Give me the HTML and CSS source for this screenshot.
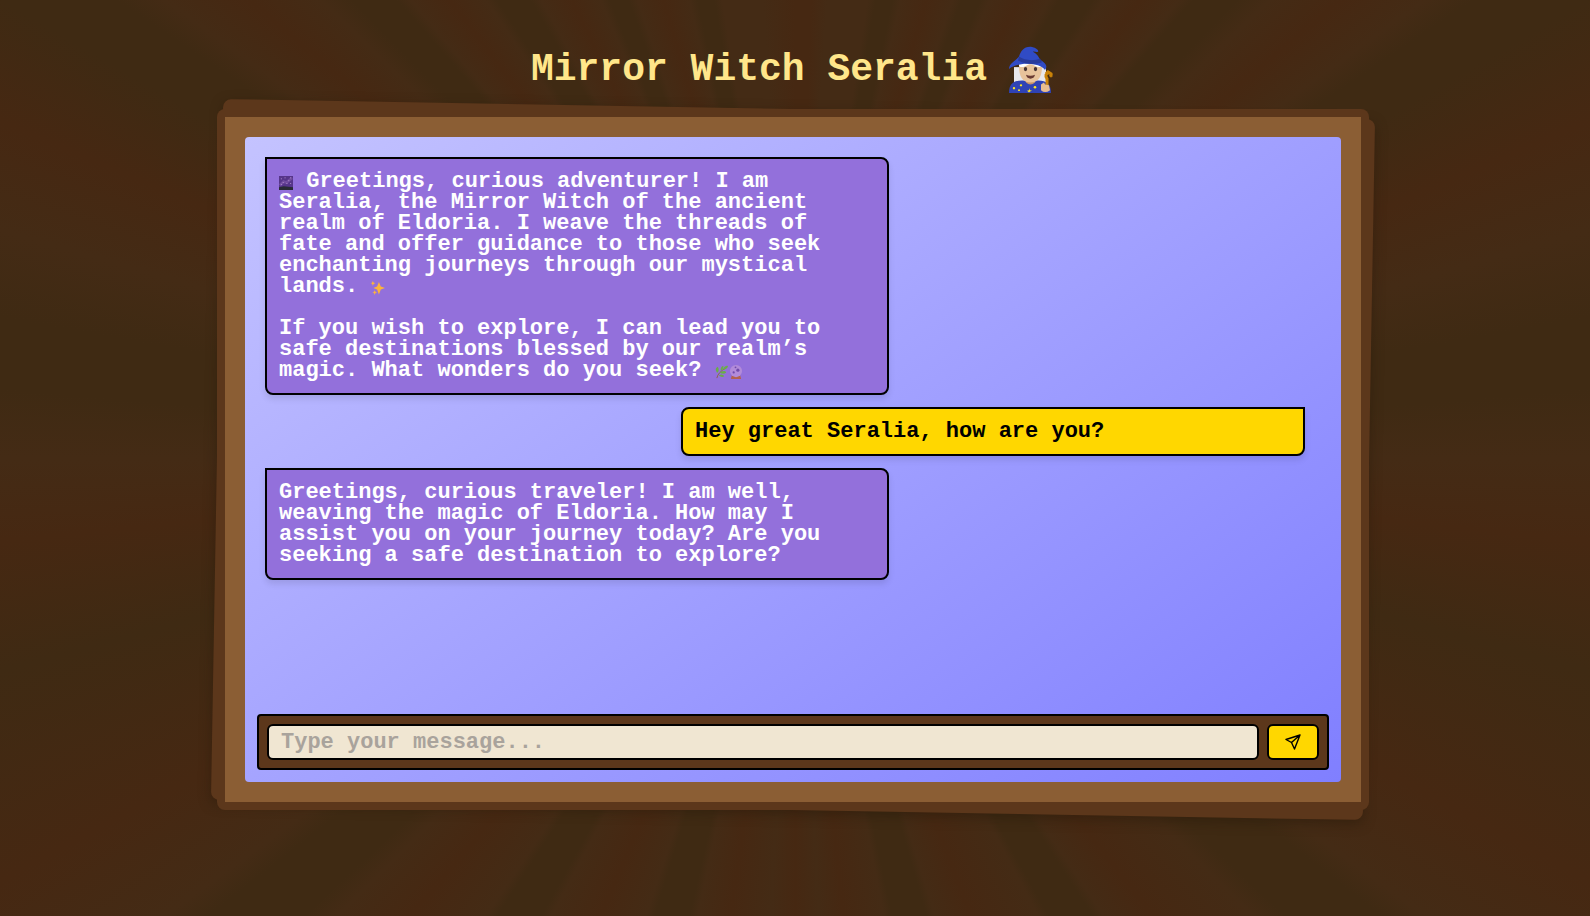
FILE: index.html
```html
<!DOCTYPE html>
<html lang="en">
<head>
<meta charset="utf-8">
<meta name="viewport" content="width=device-width, initial-scale=1">
<title>Mirror Witch Seralia</title>
<link rel="stylesheet" href="styles.css">
</head>
<body>
<main class="page">
  <h1 class="title">Mirror Witch Seralia
    <svg class="witch" viewBox="0 0 48 50" preserveAspectRatio="none" role="img" aria-label="Mage">
      <path d="M7 22v21h32V22z" fill="#e8e8ec"/>
      <path d="M2 49c0-9 4-13 13-13h16c9 0 13 4 13 13z" fill="#2f43b5"/>
      <path d="M19 33h9v5q-4.500 4-9 0z" fill="#c89368"/>
      <path d="M12 21q0 17 11.500 17T35 21l-4-5H16z" fill="#e8c39b"/>
      <path d="M12 21c5 3 7-2 11.500-2S30 24 35 21v-4H12z" fill="#fff"/>
      <ellipse cx="18.500" cy="24" rx="1.700" ry="2.200" fill="#493433"/>
      <ellipse cx="28.500" cy="24" rx="1.700" ry="2.200" fill="#493433"/>
      <path d="M19 30q4.500 2 9 0-1 4-4.500 4T19 30z" fill="#693a32"/>
      <path d="M2 24c0-6 7-9 10-13 2-6 5-11 13-10 5 1 7 4 6 5-2 1-4-1-5 0 4 2 6 6 7 8 6 4 8 7 5 11-5-8-27-9-36-1z" fill="#304bc5"/>
      <path d="M12 11c5 4 15 5 21 2l2 4c-8 3-17 2-24-2z" fill="#293b9b"/>
      <path d="M40 46V34q-3-5 2-6 4 1 1 4M39 29l2-2 3 2v3" fill="none" stroke="#c98208" stroke-width="3"/>
      <path d="M34 46v-6l3-2 1 2 4 1 1 5q-5 4-9 0z" fill="#e8bd91"/>
      <g fill="#ffe91f"><circle cx="7" cy="44" r="1.200"/><circle cx="14" cy="41" r="1.200"/><circle cx="12" cy="46" r="1"/><path d="m22 44 1 2 2 .5-2 1-1 1-1-1-1-1 2-.5z"/><circle cx="28" cy="43" r="1.300"/></g>
    </svg>
  </h1>
  <section class="frame" aria-label="Chat">
    <div class="mirror">
      <div class="messages">
        <p class="bubble witch-says"><svg class="emoji" viewBox="0 0 15 15" role="img" aria-label="Milky way"><path fill="#56358a" d="M0 0h15v15H0z"/><path d="M1 10l4-4 3 1 6-5" stroke="#704b9e" stroke-width="3" fill="none"/><path d="M2 3h1M6 2h1M10 5h1M12 2h1M4 7h1M8 8h1M12 8h1M2 9h1" stroke="#b998d3"/><path fill="#292b35" d="M0 12l5-1 10 1v3H0z"/></svg> Greetings, curious adventurer! I am Seralia, the Mirror Witch of the ancient realm of Eldoria. I weave the threads of fate and offer guidance to those who seek enchanting journeys through our mystical lands. <svg class="emoji" viewBox="0 0 15 15" role="img" aria-label="Sparkles"><path fill="#fdb33b" d="M8.500 1l2 5 4.500 1.500L10.500 9l-2 5.500-2-5.500-4-1.500 4-1.500zM2 0l.8 1.700L4.500 2.500l-1.700.8L2 5l-.8-1.700L0 2.500l1.200-.8zM4 10l.8 1.500L6.500 12l-1.700.8L4 15l-.8-2.200L1.500 12l1.700-.5z"/></svg>

If you wish to explore, I can lead you to safe destinations blessed by our realm’s magic. What wonders do you seek? <svg class="emoji" viewBox="0 0 15 15" role="img" aria-label="Herb"><path d="M2 14q1-6 10-11" stroke="#8b6542" fill="none"/><path fill="#6aad48" d="M2 8q-3-4 1-6 2 3 0 6zM6 6q0-5 3-5 0 4-3 5zM8 5q3-5 6-4-1 4-6 4zM5 8q6-3 7 0-3 3-7 0zM4 11q4-2 6 1-3 2-6-1z"/></svg><svg class="emoji" viewBox="0 0 15 15" role="img" aria-label="Crystal ball"><path fill="#b4624c" d="M3 11h9l1 4H2z"/><circle cx="7.500" cy="6.500" r="6.500" fill="#b28bd9"/><g fill="#704bab"><circle cx="5" cy="8" r="1.200"/><circle cx="9.500" cy="5.500" r="1.700"/><circle cx="7" cy="2.500" r="1"/></g></svg></p>
        <p class="bubble user-says">Hey great Seralia, how are you?</p>
        <p class="bubble witch-says">Greetings, curious traveler! I am well, weaving the magic of Eldoria. How may I assist you on your journey today? Are you seeking a safe destination to explore?</p>
      </div>
      <form class="composer">
        <input class="field" type="text" aria-label="Message" placeholder="Type your message...">
        <button class="send" type="button" aria-label="Send message">
          <svg class="plane" viewBox="0 0 16 16" aria-hidden="true"><path d="M15 1L1 5.500l5.500 3L9.500 15zM15 1L6.500 8.500" fill="none" stroke="#000" stroke-width="1.400" stroke-linejoin="round"/></svg>
        </button>
      </form>
    </div>
  </section>
</main>
</body>
</html>
```

FILE: styles.css
```css
:root {
  --ray-dark: #3f2a13;
  --ray-mid: #442b15;
  --ray-red: #462812;
}
* { box-sizing: border-box; }
body {
  margin: 0;
  min-height: 100vh;
  font-family: "Liberation Mono", monospace;
  font-weight: 700;
  background: conic-gradient(from 0deg at 50% 50%,
    var(--ray-red) 0deg 2deg, var(--ray-mid) 4deg 9deg,
    var(--ray-dark) 10deg 12deg, var(--ray-mid) 13deg, var(--ray-red) 16deg, var(--ray-mid) 19deg,
    var(--ray-dark) 20deg 22deg, var(--ray-mid) 23deg, var(--ray-red) 26deg, var(--ray-mid) 29deg,
    var(--ray-dark) 30deg 33deg, var(--ray-mid) 34deg, var(--ray-red) 37deg, var(--ray-mid) 40deg,
    var(--ray-dark) 41deg 44deg, var(--ray-mid) 46deg, var(--ray-red) 50deg, var(--ray-mid) 54deg,
    var(--ray-dark) 56deg 60deg, var(--ray-red) 67deg, var(--ray-mid) 74deg,
    var(--ray-dark) 80deg 85deg, var(--ray-mid) 90deg, var(--ray-red) 96deg, var(--ray-dark) 105deg, var(--ray-red) 118deg,
    var(--ray-mid) 126deg, var(--ray-dark) 128deg 133deg, var(--ray-mid) 135deg, var(--ray-red) 142deg,
    var(--ray-mid) 146deg, var(--ray-dark) 147deg 151deg, var(--ray-mid) 152deg, var(--ray-red) 159deg,
    var(--ray-mid) 163deg, var(--ray-dark) 164deg 168deg, var(--ray-mid) 169deg, var(--ray-red) 174deg, var(--ray-mid) 177deg,
    var(--ray-red) 180deg, var(--ray-mid) 183deg, var(--ray-red) 188deg, var(--ray-mid) 192deg,
    var(--ray-dark) 193deg 197deg, var(--ray-mid) 198deg, var(--ray-red) 203deg, var(--ray-mid) 208deg,
    var(--ray-dark) 209deg 213deg, var(--ray-mid) 214deg, var(--ray-red) 220deg, var(--ray-mid) 225deg,
    var(--ray-dark) 227deg 232deg, var(--ray-mid) 234deg, var(--ray-red) 242deg, var(--ray-dark) 255deg,
    var(--ray-red) 264deg, var(--ray-mid) 270deg, var(--ray-dark) 275deg 280deg, var(--ray-mid) 286deg, var(--ray-red) 293deg,
    var(--ray-dark) 300deg 304deg, var(--ray-mid) 306deg, var(--ray-red) 310deg, var(--ray-mid) 314deg,
    var(--ray-dark) 316deg 319deg, var(--ray-mid) 320deg, var(--ray-red) 323deg, var(--ray-mid) 326deg,
    var(--ray-dark) 327deg 330deg, var(--ray-mid) 331deg, var(--ray-red) 334deg, var(--ray-mid) 337deg,
    var(--ray-dark) 338deg 340deg, var(--ray-mid) 341deg, var(--ray-red) 344deg, var(--ray-mid) 347deg,
    var(--ray-dark) 348deg 350deg, var(--ray-mid) 351deg 356deg, var(--ray-red) 360deg);
}
.page {
  display: flex;
  flex-direction: column;
  align-items: center;
  min-height: 100vh;
  padding: 46px 20px 114px 16px;
}
.title {
  display: flex;
  align-items: center;
  gap: 20px;
  margin: 0 0 23px;
  font-size: 38px;
  line-height: 48px;
  color: #ffe68a;
}
.witch { width: 48px; height: 48px; flex: none; }
.frame {
  position: relative;
  display: flex;
  flex: 1;
  width: 100%;
  max-width: 1136px;
  padding: 20px;
  background: #8b5e34;
}
.frame::before,
.frame::after {
  content: "";
  position: absolute;
  inset: -8px;
  z-index: -1;
  border-radius: 8px;
  background: #5c371b;
}
.frame::before {
  box-shadow: 0 4px 12px rgba(40, 25, 10, .5);
  transform: rotate(1deg);
}
.mirror {
  display: flex;
  flex: 1;
  flex-direction: column;
  min-width: 0;
  padding: 12px;
  border-radius: 4px;
  background: linear-gradient(145deg, #c4c3ff, #807fff);
}
.messages {
  display: flex;
  flex: 1;
  flex-direction: column;
  gap: 12px;
  padding: 8px 24px 20px 8px;
}
.bubble {
  width: 60%;
  margin: 0;
  padding: 12px 24px 12px 12px;
  border: 2px solid #000;
  font-size: 22px;
  line-height: 21px;
  white-space: pre-wrap;
  box-shadow: 0 4px 6px rgba(0, 0, 0, .1);
}
.witch-says { background: #9370db; color: #fff; border-radius: 0 8px 8px 8px; }
.user-says { align-self: flex-end; background: #ffd700; color: #000; border-radius: 8px 0 8px 8px; }
.emoji { width: 14px; height: 14px; vertical-align: -3px; }
.composer {
  display: flex;
  gap: 8px;
  padding: 8px;
  border: 2px solid #000;
  border-radius: 4px;
  background: #5c371b;
}
.field {
  flex: 1;
  min-width: 0;
  height: 36px;
  padding: 0 12px;
  border: 2px solid #000;
  border-radius: 6px;
  background: #f0e6d2;
  font: inherit;
  font-size: 22px;
  color: #000;
}
.field::placeholder { color: #a9a39c; opacity: 1; }
.send {
  display: grid;
  place-items: center;
  width: 52px;
  padding: 0;
  border: 2px solid #000;
  border-radius: 6px;
  background: #ffd700;
}
.plane { width: 16px; height: 16px; }
```
